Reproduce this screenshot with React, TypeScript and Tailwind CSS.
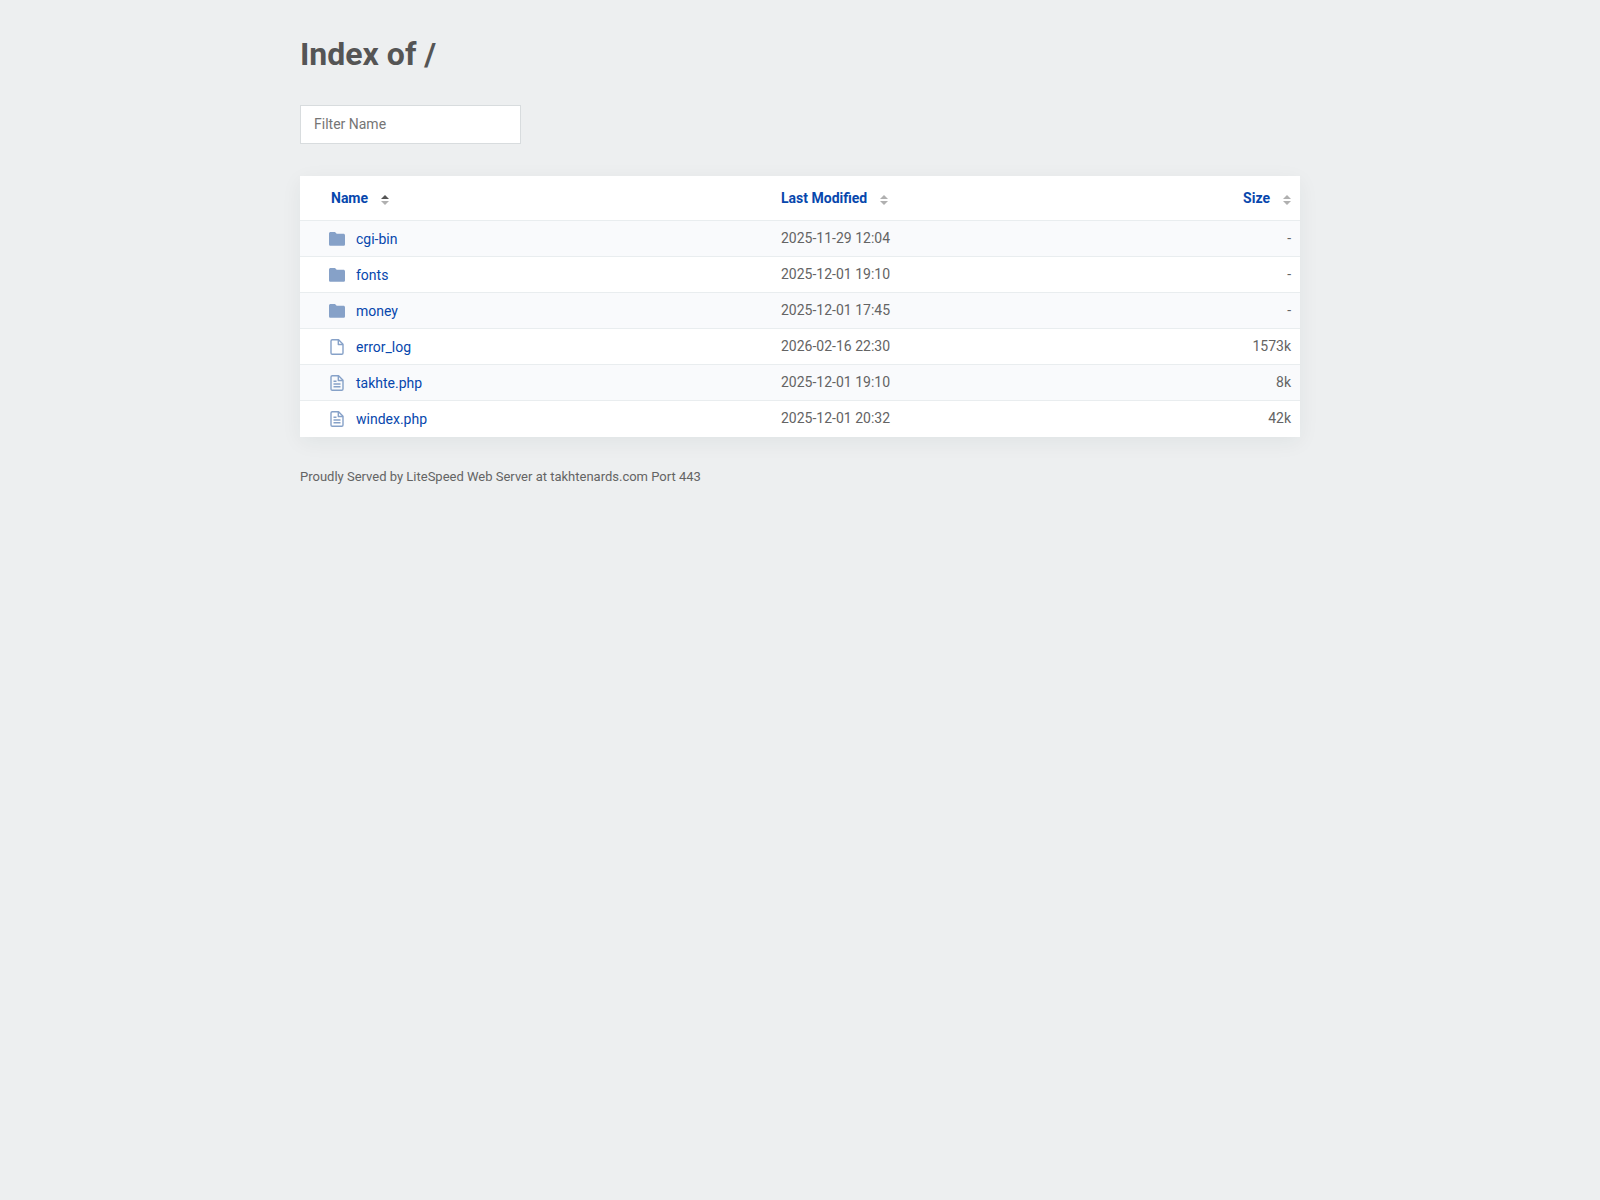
import { useState } from 'react';
import clsx from 'clsx';

type EntryKind = 'folder' | 'file' | 'text';
type SortKey = 'name' | 'modified' | 'bytes';

type Entry = {
  kind: EntryKind;
  name: string;
  modified: string;
  size: string;
  bytes: number;
};

const ENTRIES: Entry[] = [
  { kind: 'folder', name: 'cgi-bin', modified: '2025-11-29 12:04', size: '-', bytes: 0 },
  { kind: 'folder', name: 'fonts', modified: '2025-12-01 19:10', size: '-', bytes: 0 },
  { kind: 'folder', name: 'money', modified: '2025-12-01 17:45', size: '-', bytes: 0 },
  { kind: 'file', name: 'error_log', modified: '2026-02-16 22:30', size: '1573k', bytes: 1573 },
  { kind: 'text', name: 'takhte.php', modified: '2025-12-01 19:10', size: '8k', bytes: 8 },
  { kind: 'text', name: 'windex.php', modified: '2025-12-01 20:32', size: '42k', bytes: 42 },
];

const COLUMNS: { key: SortKey; label: string; className: string }[] = [
  { key: 'name', label: 'Name', className: 'w-[47%] pl-[31px] text-left' },
  { key: 'modified', label: 'Last Modified', className: 'pl-[11px] text-left' },
  { key: 'bytes', label: 'Size', className: 'pr-[9px] text-right' },
];

function EntryIcon({ kind }: { kind: EntryKind }) {
  if (kind === 'folder') {
    return (
      <svg className="size-4 shrink-0" viewBox="0 0 16 16" fill="#86a1c8" aria-hidden="true">
        <path d="M1.6 1H6l1.7 1.8h6.7c.9 0 1.6.7 1.6 1.6v8.8c0 .9-.7 1.6-1.6 1.6H1.6c-.9 0-1.6-.7-1.6-1.6V2.6C0 1.7.7 1 1.6 1z" />
      </svg>
    );
  }
  return (
    <svg
      className="size-4 shrink-0"
      viewBox="0 0 16 16"
      fill="none"
      stroke="#86a1c8"
      strokeWidth="1.4"
      strokeLinejoin="round"
      aria-hidden="true"
    >
      <path d="M9.6.8H3.3C2.6.8 2 1.400 2 2.100v11.800c0 .7.6 1.300 1.300 1.300h9.400c.7 0 1.300-.6 1.300-1.300V5.200L9.600.8z" />
      <path d="M9.3 1v4.500H14" />
      {kind === 'text' && <path d="M4.500 6.200h3M4.500 9h7M4.500 11.700h7" />}
    </svg>
  );
}

function SortIcon({ dir }: { dir?: 'asc' | 'desc' }) {
  return (
    <svg className="h-[10px] w-2 translate-y-0.5" viewBox="0 0 8 10" aria-hidden="true">
      <path d="M0 4h8L4 0z" fill={dir === 'asc' ? '#555' : '#b0b0b0'} />
      <path d="M0 6h8l-4 4z" fill={dir === 'desc' ? '#555' : '#b0b0b0'} />
    </svg>
  );
}

export default function App() {
  const [filter, setFilter] = useState('');
  const [sort, setSort] = useState<{ key: SortKey; dir: 'asc' | 'desc' }>({
    key: 'name',
    dir: 'asc',
  });

  const toggleSort = (key: SortKey) => {
    setSort((s) => ({ key, dir: s.key === key && s.dir === 'asc' ? 'desc' : 'asc' }));
  };

  const rows = ENTRIES.filter((e) => e.name.toLowerCase().includes(filter.toLowerCase()));
  // folders always stay above files
  rows.sort((a, b) => {
    if ((a.kind === 'folder') !== (b.kind === 'folder')) return a.kind === 'folder' ? -1 : 1;
    const order = a[sort.key] < b[sort.key] ? -1 : a[sort.key] > b[sort.key] ? 1 : 0;
    return sort.dir === 'asc' ? order : -order;
  });

  return (
    <div className="min-h-screen bg-[#edeff0] px-5 py-8 font-[Roboto,sans-serif] text-sm text-[#646464]">
      <main className="mx-auto max-w-[1000px]">
        <h1 className="text-[32px] leading-[44px] font-bold text-[#555]">Index of /</h1>

        <input
          type="text"
          aria-label="Filter Name"
          placeholder="Filter Name"
          value={filter}
          onChange={(e) => setFilter(e.target.value)}
          className="mt-[29px] block h-[39px] w-[221px] border border-[#d8dcde] bg-white px-[13px] pb-0.5 text-sm outline-none placeholder:text-[#757575]"
        />

        <table className="mt-8 w-full border-separate border-spacing-0 bg-white shadow-[0_5px_20px_rgba(0,50,50,0.06)]">
          <thead>
            <tr className="h-[45px]">
              {COLUMNS.map(({ key, label, className }) => (
                <th key={key} className={clsx('border-b border-[#e9edef] py-0 font-bold', className)}>
                  <button
                    type="button"
                    onClick={() => toggleSort(key)}
                    className="inline-flex cursor-pointer items-center gap-[13px] text-[#0747ad]"
                  >
                    {label}
                    <SortIcon dir={sort.key === key ? sort.dir : undefined} />
                  </button>
                </th>
              ))}
            </tr>
          </thead>
          <tbody>
            {rows.map((entry) => (
              <tr
                key={entry.name}
                className="h-9 odd:bg-[#f9fafc] [&>td]:border-b [&>td]:border-[#e9edef] last:[&>td]:border-b-0"
              >
                <td className="py-0 pl-[29px]">
                  <a href={`/${entry.name}`} className="flex items-center gap-[11px] text-[#0747ad]">
                    <EntryIcon kind={entry.kind} />
                    {entry.name}
                  </a>
                </td>
                <td className="pt-0 pb-0.5 pl-[11px]">{entry.modified}</td>
                <td className="pt-0 pr-[9px] pb-0.5 text-right">{entry.size}</td>
              </tr>
            ))}
          </tbody>
        </table>

        <footer className="mt-[30px] text-[13px] leading-5">
          Proudly Served by LiteSpeed Web Server at takhtenards.com Port 443
        </footer>
      </main>
    </div>
  );
}
